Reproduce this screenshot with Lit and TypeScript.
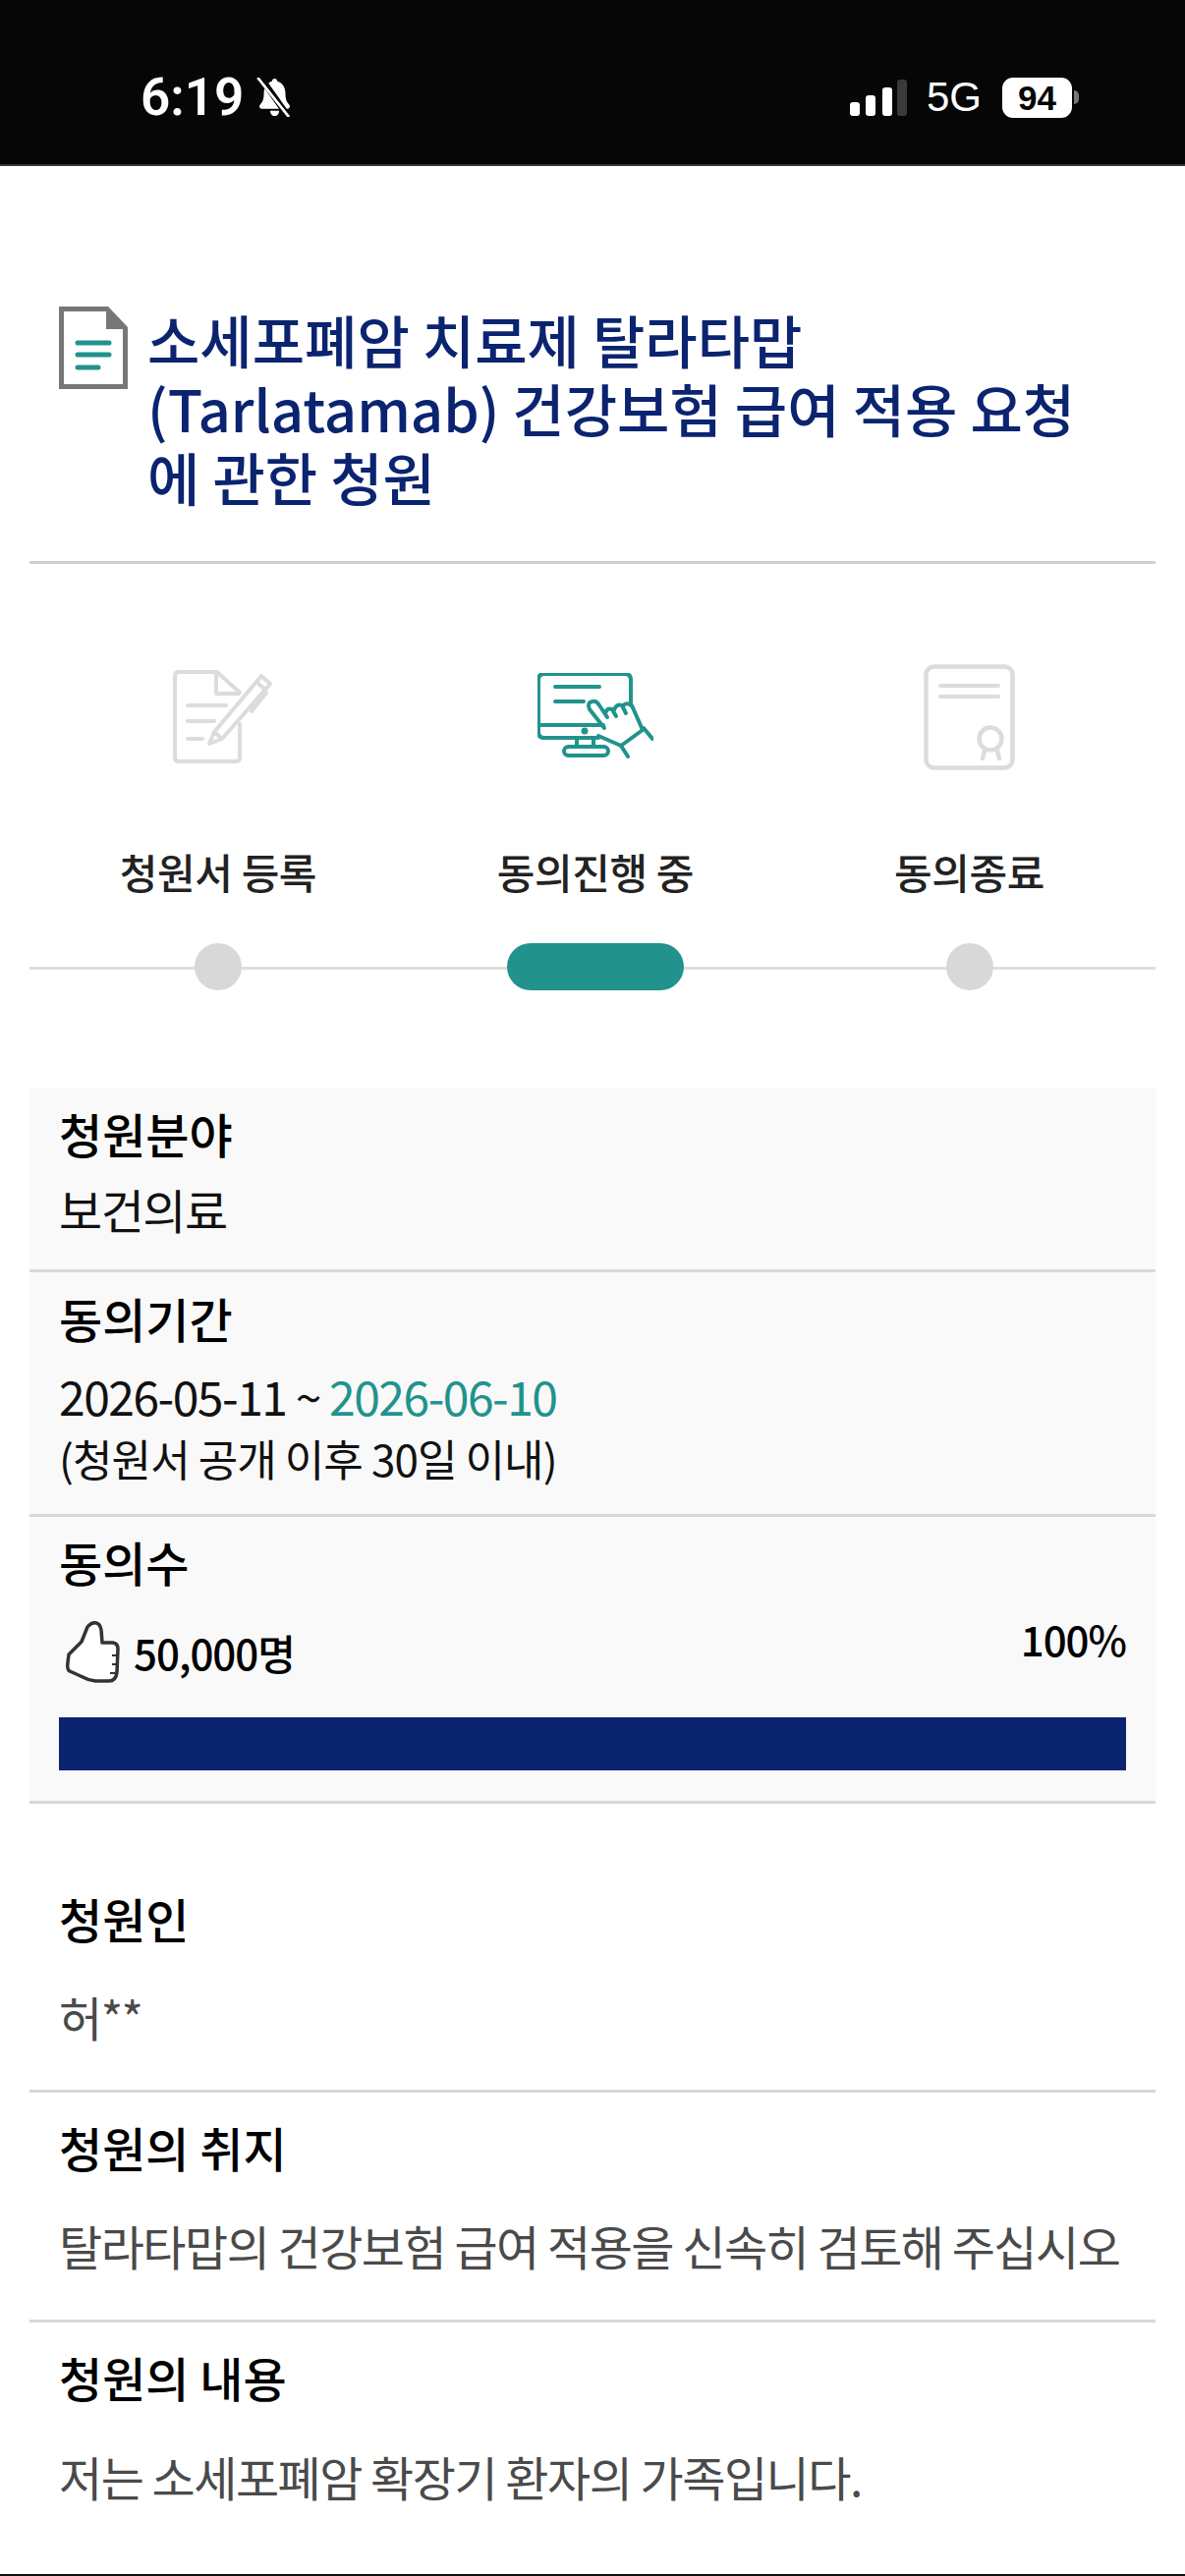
import { LitElement, html, css } from "lit";
import { customElement } from "lit/decorators.js";

const FONT = css`"Noto Sans CJK KR", "Noto Sans", sans-serif`;

@customElement("app-root")
export class AppRoot extends LitElement {
  static styles = css`
    :host { display: block; width: 1206px; height: 2622px; overflow: hidden; background: #fff; font-family: ${FONT}; color: #111; position: relative; }
    * { box-sizing: border-box; }
    svg { display: block; }
    .status { height: 169px; background: #060606; border-bottom: 2px solid #333; display: flex; justify-content: space-between; padding: 66px 108px 0 143px; color: #fff; font-family: "Liberation Sans", sans-serif; }
    .status-left, .status-right { display: flex; align-items: center; height: 66px; }
    .time { font-family: Roboto, "Liberation Sans", sans-serif; font-size: 53px; font-weight: 600; line-height: 66px; }
    .bell { margin-left: 12px; }
    .net { font-size: 42px; margin: 0 21px 0 20px; line-height: 66px; }
    .batt { width: 71px; height: 41px; background: #fff; border-radius: 11px; color: #060606; font-size: 35px; font-weight: 700; text-align: center; line-height: 41px; }
    .nub { margin-left: 2px; width: 5px; height: 14px; border-radius: 0 5px 5px 0; background: #777; }

    .content { padding: 0 30px; }
    .title { display: flex; gap: 20px; padding: 141px 0 51px 30px; border-bottom: 3px solid #d0d0d0; align-items: flex-start; }
    .title svg { flex: none; margin-top: 2px; }
    h1 { margin: 0; font-size: 58px; line-height: 70px; font-weight: 500; color: #0b2470; white-space: nowrap; }

    .steps { position: relative; display: grid; grid-template-columns: repeat(3, 1fr); margin-top: 96px; height: 322px; }
    .steps::before { content: ""; position: absolute; left: 0; right: 0; top: 314px; height: 3px; background: #ddd; }
    .step { display: flex; flex-direction: column; align-items: center; position: relative; padding-left: 2px; }
    .step.mid { padding-left: 6px; }
    .step.last { padding-left: 3px; }
    .step .ic { height: 120px; display: flex; align-items: center; justify-content: center; }
    .ic.first { padding-left: 10px; }
    .ic.screen svg { margin-top: -3px; }
    .step .lbl { margin-top: 67px; font-size: 42px; line-height: 60px; letter-spacing: -0.4px; font-weight: 500; color: #222; }
    .dot { margin-top: 43px; width: 48px; height: 48px; border-radius: 24px; background: #d8d8d8; position: relative; }
    .dot.on { width: 180px; background: #21938c; }

    .info { margin-top: 115px; background: #f9f9f9; border-bottom: 3px solid #d8d8d8; }
    .row { padding: 14px 30px 0; border-bottom: 3px solid #d8d8d8; }
    .row:last-child { border-bottom: 0; }
    .row.a { height: 188px; }
    .row.b { height: 249px; }
    .row.c { height: 289px; padding-top: 13px; }
    .k { font-size: 48px; line-height: 64px; font-weight: 500; color: #000; }
    .v { font-size: 48px; line-height: 64px; letter-spacing: -1.5px; margin-top: 13px; color: #111; }
    .row.b .v { margin-top: 15px; }
    .sub { font-size: 44px; line-height: 54px; letter-spacing: -0.9px; color: #111; margin-top: 5px; }
    .count { display: flex; justify-content: space-between; align-items: flex-start; margin-top: 17px; height: 102px; }
    .num { display: flex; align-items: center; gap: 14px; padding: 4px 0 0 7px; font-size: 42px; font-weight: 500; letter-spacing: -1px; line-height: 80px; color: #000; }
    .pct { font-size: 42px; font-weight: 500; letter-spacing: -1px; line-height: 60px; color: #000; }
    .bar { height: 54px; background: #0b2470; margin-top: 8px; }

    .sec { padding: 0 30px; border-bottom: 3px solid #d8d8d8; }
    .sec:last-child { border-bottom: 0; }
    .sec.one { padding-top: 84px; height: 294px; }
    .sec.one .v2 { margin-top: 36px; }
    .sec.two, .sec.three { padding-top: 23px; height: 234px; }
    .sec.two .v2 { margin-top: 36px; }
    .v2 { font-size: 48px; line-height: 64px; letter-spacing: -1.5px; color: #4a4a4a; margin-top: 37px; white-space: nowrap; }
    .end { position: absolute; left: 0; right: 0; bottom: 0; height: 2px; background: #111; }
  `;

  render() {
    return html`
      <div class="status">
        <div class="status-left"><span class="time">6:19</span>
          <svg class="bell" width="39" height="40" viewBox="0 0 40 44"><path fill="#fff" d="M20 1c2 0 3 2 3 3 6 2 9 7 9 13 0 6 1 10 4 13 2 2 1 5-2 5H6c-3 0-4-3-2-5 3-3 4-7 4-13 0-6 3-11 9-13 0-1 1-3 3-3z"/><path fill="#fff" d="M15 37h10c0 3-2 6-5 6s-5-3-5-6z"/><path stroke="#060606" stroke-width="7" d="M3 -2 37 46"/><path stroke="#fff" stroke-width="3" d="M1 0 36 44"/></svg>
        </div>
        <div class="status-right">
          <svg width="58" height="37" viewBox="0 0 58 37"><rect x="0" y="23" width="10" height="14" rx="3" fill="#fff"/><rect x="16" y="16" width="10" height="21" rx="3" fill="#fff"/><rect x="33" y="8" width="10" height="29" rx="3" fill="#fff"/><rect x="48" y="0" width="10" height="37" rx="3" fill="#3a3a3a"/></svg>
          <span class="net">5G</span>
          <div class="batt">94</div><div class="nub"></div>
        </div>
      </div>
      <div class="content">
        <div class="title">
          <svg width="70" height="84" viewBox="0 0 70 84"><path d="M2.500 2.500H49L67.500 22V81.500H2.500Z" fill="#fff" stroke="#777" stroke-width="5"/><path d="M48 2 70 23H48Z" fill="#777"/><path d="M19 37H51M19 49H51M19 62H40" stroke="#21938c" stroke-width="5" stroke-linecap="round"/></svg>
          <h1>소세포폐암 치료제 탈라타맙<br>(Tarlatamab) 건강보험 급여 적용 요청<br>에 관한 청원</h1>
        </div>
        <div class="steps">
          <div class="step">
            <div class="ic first"><svg width="102" height="96" viewBox="0 0 102 96" fill="none" stroke="#dcdcdc" stroke-width="4" stroke-linecap="round" stroke-linejoin="round"><path d="M68 23 45 2H6Q2 2 2 6V89Q2 93 6 93H64Q68 93 68 89V55"/><path d="M44 2V24H67"/><path d="M15 36H54M15 52H42M15 70H30"/><path d="M37 75 42 63 90 6 99 14 50 70ZM42 63 50 70M85 12 94 20M95 23 80 42"/></svg></div>
            <div class="lbl">청원서 등록</div><div class="dot"></div>
          </div>
          <div class="step mid">
            <div class="ic screen"><svg width="118" height="87" viewBox="0 0 118 87" fill="none" stroke="#21938c" stroke-width="4" stroke-linecap="round" stroke-linejoin="round"><path d="M62 66H7Q1 66 1 60V7Q1 1 7 1H89Q95 1 95 7V33"/><path d="M1 53H67"/><circle cx="48" cy="59" r="1.500" fill="#21938c"/><path d="M40 66V75M57 66V75"/><rect x="27" y="75" width="45" height="9" rx="4.500"/><path d="M18 14H63M18 29H47"/><path d="M53 37Q50 30 56 29Q60 28 63 33L71 45M68 56 53 37M69 42Q70 35 76 37L80 44M78 38Q80 31 86 33L90 41M87 34Q90 29 96 33L107 58 85 74 62 64"/><path d="M108 56 117 67M85 74 92 85"/></svg></div>
            <div class="lbl">동의진행 중</div><div class="dot on"></div>
          </div>
          <div class="step last">
            <div class="ic"><svg width="93" height="108" viewBox="0 0 93 108" fill="none" stroke="#dcdcdc" stroke-width="4.500" stroke-linecap="round" stroke-linejoin="round"><rect x="2.500" y="2.500" width="88" height="103" rx="8"/><path d="M17 22H76M17 33H76" stroke-width="4"/><circle cx="68" cy="76" r="11.500"/><path d="M62 88 60 96M75 88 77 96"/></svg></div>
            <div class="lbl">동의종료</div><div class="dot"></div>
          </div>
        </div>
        <div class="info">
          <div class="row a"><div class="k">청원분야</div><div class="v">보건의료</div></div>
          <div class="row b"><div class="k">동의기간</div><div class="v">2026-05-11 ~ <span style="color:#21938c">2026-06-10</span></div><div class="sub">(청원서 공개 이후 30일 이내)</div></div>
          <div class="row c"><div class="k">동의수</div>
            <div class="count">
              <div class="num"><svg width="55" height="64" viewBox="0 0 55 64" fill="#fff" stroke="#333" stroke-width="3.500" stroke-linejoin="round"><path d="M22 6Q26 1 31 2 35 3 36 9L37 22 48 22Q53 23 53 28L52 52Q51 61 44 61L30 61Q22 60 15 56L4 51Q1 50 2 42L3 34 16 21Z"/><path d="M47 35 53 35M47 44 52 44M45 53 51 53" stroke-width="2"/></svg><span>50,000명</span></div>
              <div class="pct">100%</div>
            </div>
            <div class="bar"></div>
          </div>
        </div>
        <div class="sec one"><div class="k">청원인</div><div class="v2">허**</div></div>
        <div class="sec two"><div class="k">청원의 취지</div><div class="v2">탈라타맙의 건강보험 급여 적용을 신속히 검토해 주십시오</div></div>
        <div class="sec three"><div class="k">청원의 내용</div><div class="v2">저는 소세포폐암 확장기 환자의 가족입니다.</div></div>
      </div>
      <div class="end"></div>
    `;
  }
}
